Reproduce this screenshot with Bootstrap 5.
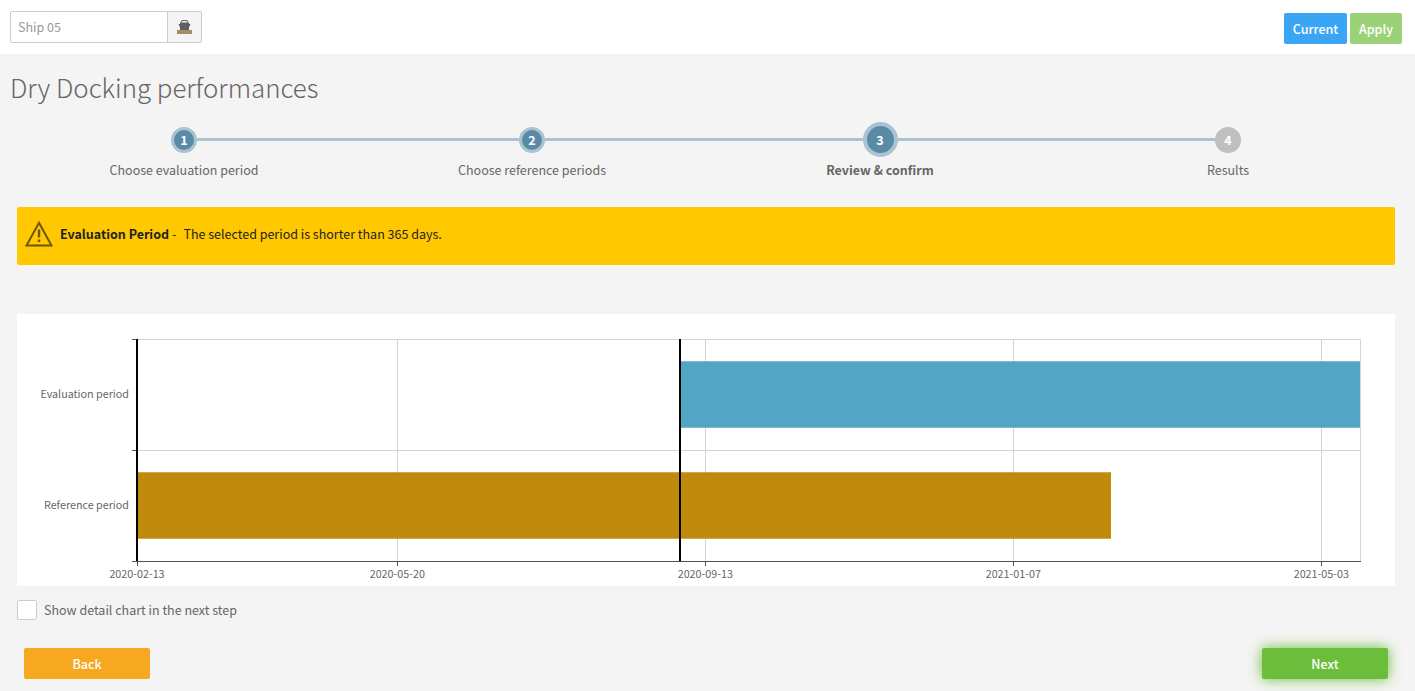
<!DOCTYPE html>
<html lang="en">
<head>
<meta charset="utf-8">
<meta name="viewport" content="width=device-width, initial-scale=1">
<title>Dry Docking performances</title>
<link href="https://cdn.jsdelivr.net/npm/bootstrap@5.3.0/dist/css/bootstrap.min.css" rel="stylesheet">
<style>
  body { background: #f4f4f4; color: #666; font-family: "Noto Sans CJK SC", "Noto Sans", sans-serif; font-size: 12.5px; line-height: 20px; min-height: 100vh; }
  .topbar { height: 54px; padding: 11px 13px 0 10px; }
  .ship-picker { width: 192px; height: 32px; }
  .ship-picker .form-control { font-size: 12.5px; line-height: 20px; color: #999; border-color: #ccc; border-radius: 2px; padding: 5px 7px; min-height: 0; }
  .ship-picker .form-control::placeholder { color: #999; }
  .ship-picker .input-group-text { width: 35px; padding: 0; background: #f4f4f4; border-color: #ccc; border-radius: 2px; }
  .top-actions { gap: 3px; padding-top: 2px; }
  .btn { --bs-btn-font-size: 12.5px; --bs-btn-line-height: 20px; --bs-btn-border-radius: 2px; --bs-btn-border-width: 0; --bs-btn-color: #fff; font-weight: 500; height: 31px; padding: 6px 0 5px; }
  .btn-current { background: #3aa5f5; width: 63px; }
  .btn-apply { background: #9bd278; width: 52px; }
  .btn-back { background: #f6a821; width: 126px; }
  .btn-next { background: #6cbd3b; width: 126px; box-shadow: 0 0 14px #6cbd3b; }
  .page-title { font-size: 25.85px; font-weight: 300; line-height: 36px; margin: 15px 0 0 10px; }
  .steps { width: 1392px; margin: 17px 0 0 10px; }
  .step-item { height: 60px; position: relative; }
  .step-item:not(:last-child)::after { content: ""; position: absolute; left: 50%; width: 100%; top: 16px; height: 3px; background: #a9c3d2; }
  .step-dot-row { height: 35px; position: relative; z-index: 1; }
  .step-dot { width: 26px; height: 26px; border-radius: 50%; border: 3px solid #a9c3d2; background: #5b8aa7; color: #fff; font-weight: 700; }
  .step-active .step-dot { width: 35px; height: 35px; border-width: 4px; }
  .step-todo .step-dot { background: #bfbfbf; border-color: #bfbfbf; }
  .step-text { margin-top: 3px; }
  .step-active .step-text { font-weight: 700; }
  .notice { margin: 25px 20px 0 17px; height: 58px; background: #ffc800; color: #222; border-radius: 2px; padding: 0 8px 4px; }
  .notice-title { margin: 0 3px 0 7px; }
  .notice-text { margin-left: 7px; }
  .chart-panel { margin: 49px 20px 0 17px; height: 272px; }
  .chart-panel text { font-size: 10.75px; fill: #666; }
  .detail-check { margin: 14px 0 0 17px; gap: 7px; }
  .detail-check .form-check-input { width: 20px; height: 20px; margin: 0; border: 1px solid #ccc; border-radius: 2px; }
  .actions { padding: 28px 27px 12px 24px; }
</style>
</head>
<body>
<header class="topbar bg-white d-flex justify-content-between">
  <div class="input-group ship-picker flex-nowrap">
    <input class="form-control" type="text" placeholder="Ship 05" aria-label="Ship">
    <span class="input-group-text justify-content-center">
      <svg width="17" height="16" viewBox="0 0 17 16" aria-hidden="true">
        <path d="M5 3.6L6.2 1.5H10.8L12 3.6" fill="none" stroke="#666" stroke-width="1.1"/>
        <path d="M4 3.5H13V5H14.5L13 8.5V11H4V8.5L2.5 5H4Z" fill="#5f5f5f"/>
        <path d="M1 11H16V15H1Z" fill="#b58a5c"/>
        <path d="M1 11.5H16M1 13.5H16" stroke="#888" stroke-width="1" stroke-dasharray="1 1"/>
      </svg>
    </span>
  </div>
  <div class="top-actions d-flex">
    <button class="btn btn-current" type="button">Current</button>
    <button class="btn btn-apply" type="button">Apply</button>
  </div>
</header>
<main>
  <h1 class="page-title">Dry Docking performances</h1>
  <div class="steps d-flex text-center">
    <div class="step-item flex-fill w-25"><div class="step-dot-row d-flex align-items-center justify-content-center"><span class="step-dot d-flex align-items-center justify-content-center">1</span></div><div class="step-text">Choose evaluation period</div></div>
    <div class="step-item flex-fill w-25"><div class="step-dot-row d-flex align-items-center justify-content-center"><span class="step-dot d-flex align-items-center justify-content-center">2</span></div><div class="step-text">Choose reference periods</div></div>
    <div class="step-item step-active flex-fill w-25"><div class="step-dot-row d-flex align-items-center justify-content-center"><span class="step-dot d-flex align-items-center justify-content-center">3</span></div><div class="step-text">Review &amp; confirm</div></div>
    <div class="step-item step-todo flex-fill w-25"><div class="step-dot-row d-flex align-items-center justify-content-center"><span class="step-dot d-flex align-items-center justify-content-center">4</span></div><div class="step-text">Results</div></div>
  </div>
  <div class="notice d-flex align-items-center" role="alert">
    <svg width="28" height="26" viewBox="0 0 28 26" aria-hidden="true" fill="none" stroke="#6b5608" stroke-width="2"><path d="M14 1.8L26.5 24.5H1.5Z"/><path d="M14 8.5V16.5M14 18.5V21" stroke-width="2.4"/></svg>
    <b class="notice-title">Evaluation Period</b><span>-</span><span class="notice-text">The selected period is shorter than 365 days.</span>
  </div>
  <section class="chart-panel bg-white">
    <svg class="d-block" width="1378" height="272" viewBox="17 314 1378 272" role="img" aria-label="Evaluation and reference periods">
      <g stroke="#d4d4d4" fill="none"><path d="M137 339.5H1360.5V561M137 450.5H1360M397.5 339V561M705.5 339V561M1013.5 339V561M1321.5 339V561"/></g>
      <path d="M680 361.2H1360V427.8H680Z" fill="#52a5c3"/>
      <path d="M137 472.2H1111V538.8H137Z" fill="#c08b0d"/>
      <path d="M132 339.5H137M132 450.5H137M132 561.5H1361M137.5 561V566M397.5 561V566M705.5 561V566M1013.5 561V566M1321.5 561V566" stroke="#555"/>
      <path d="M137 339V561M680 339V561" stroke="#000" stroke-width="2"/>
      <g text-anchor="end"><text x="129" y="398">Evaluation period</text><text x="129" y="509">Reference period</text></g>
      <g text-anchor="middle"><text x="137" y="578">2020-02-13</text><text x="397.3" y="578">2020-05-20</text><text x="705.3" y="578">2020-09-13</text><text x="1013.3" y="578">2021-01-07</text><text x="1321.3" y="578">2021-05-03</text></g>
    </svg>
  </section>
  <div class="detail-check d-flex align-items-center">
    <input class="form-check-input" type="checkbox" id="detail"><label for="detail">Show detail chart in the next step</label>
  </div>
  <div class="actions d-flex justify-content-between">
    <button class="btn btn-back" type="button">Back</button>
    <button class="btn btn-next" type="button">Next</button>
  </div>
</main>
<script src="https://cdn.jsdelivr.net/npm/bootstrap@5.3.0/dist/js/bootstrap.bundle.min.js"></script>
</body>
</html>
